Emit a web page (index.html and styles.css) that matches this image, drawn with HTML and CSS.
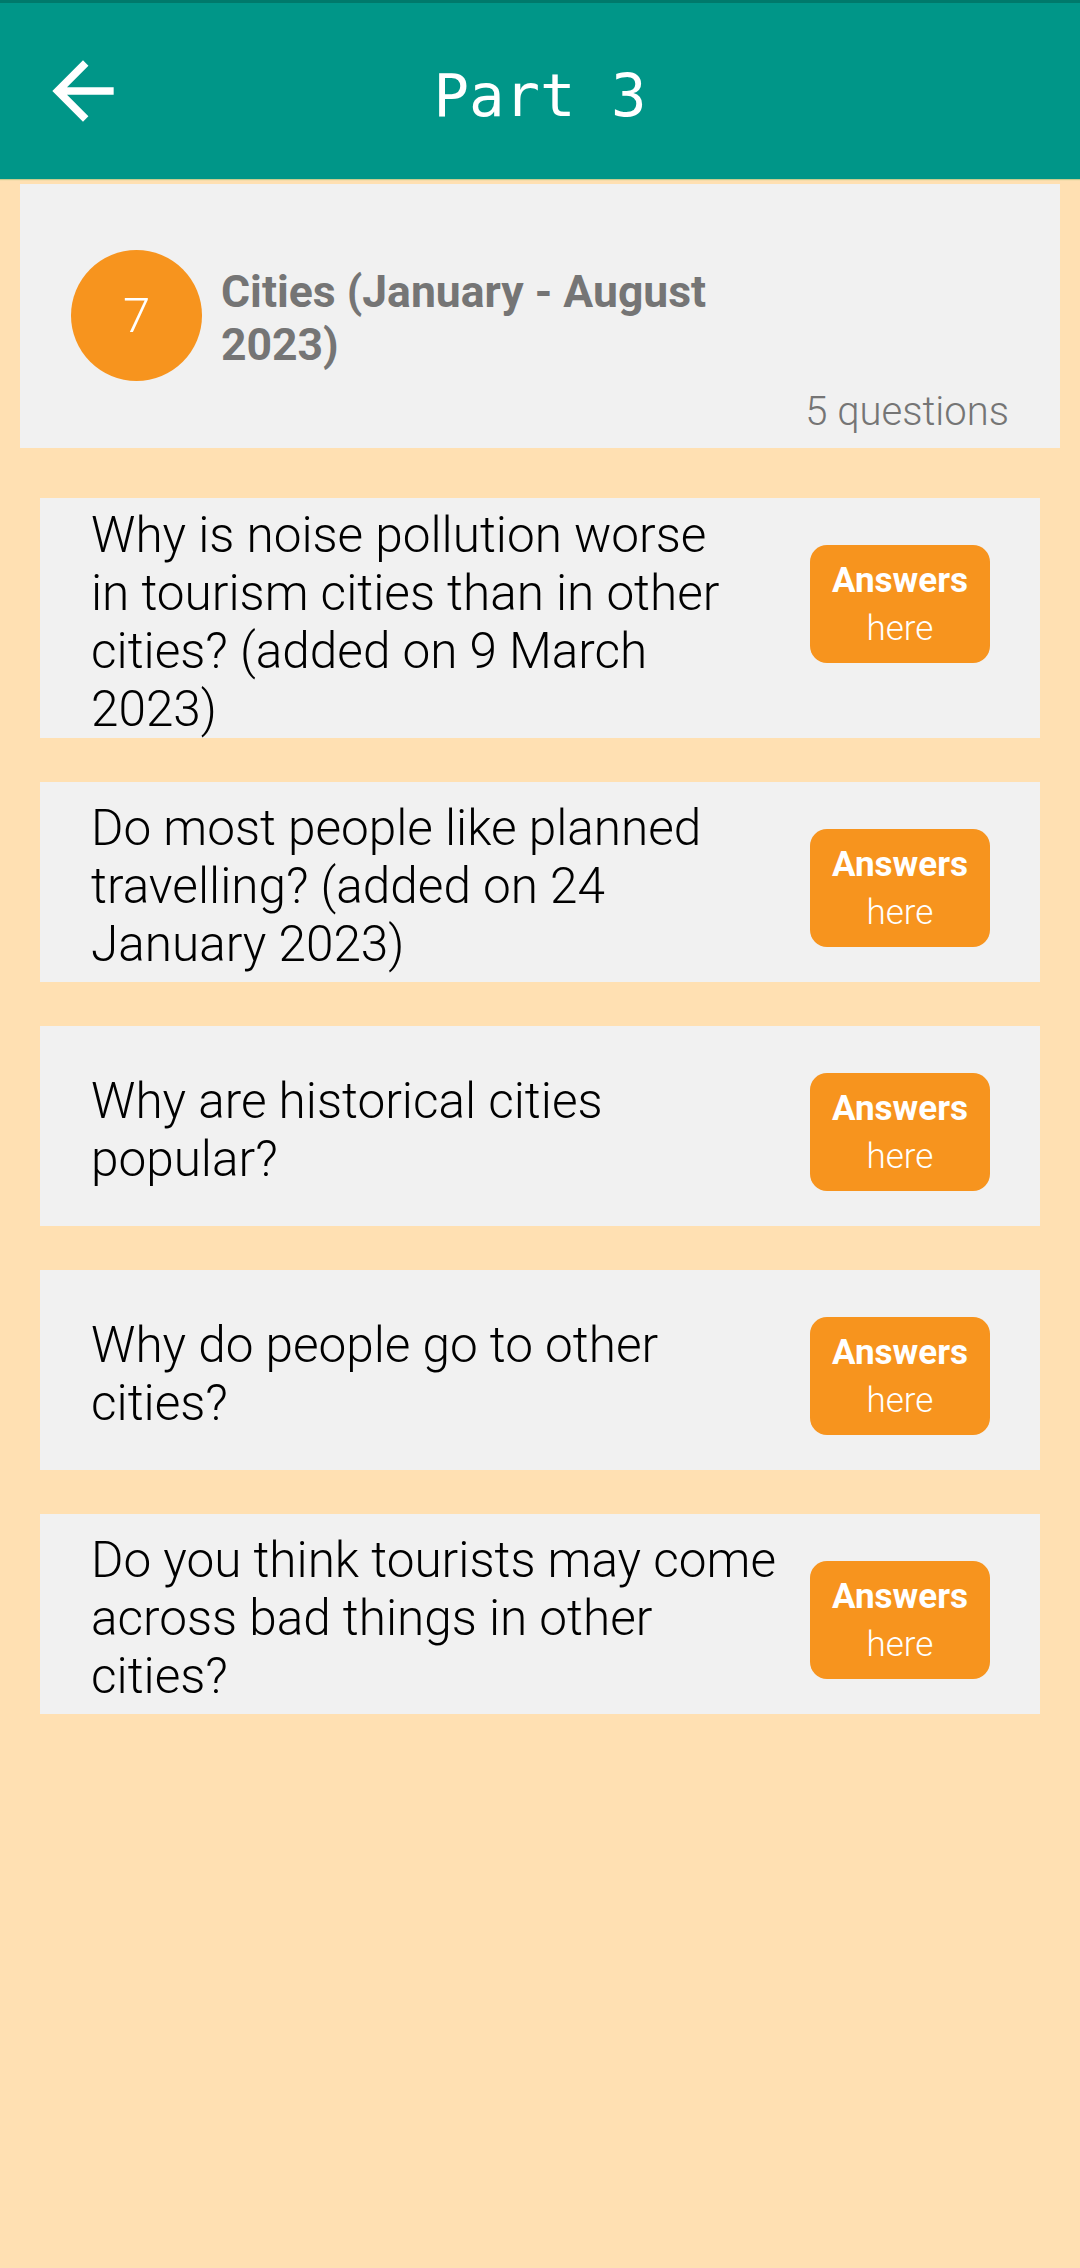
FILE: index.html
```html
<!DOCTYPE html>
<html lang="en">
<head>
<meta charset="utf-8">
<title>Part 3</title>
<link rel="stylesheet" href="styles.css">
</head>
<body>
<header class="appbar">
  <div class="appbar-nav">
    <svg class="back-icon" viewBox="0 0 24 24" aria-hidden="true"><path d="M20 11H7.83l5.59-5.59L12 4l-8 8 8 8 1.41-1.41L7.83 13H20v-2z"/></svg>
  </div>
  <h1 class="appbar-title">Part 3</h1>
  <div></div>
</header>

<main class="content">
  <section class="topic-card">
    <div class="topic-row">
      <div class="topic-badge">7</div>
      <h2 class="topic-title">Cities (January - August<br>2023)</h2>
    </div>
    <div class="topic-count">5 questions</div>
  </section>

  <div class="question">
    <p class="question-text">Why is noise pollution worse<br>in tourism cities than in other<br>cities? (added on 9 March<br>2023)</p>
    <a class="answer-btn"><span class="answer-strong">Answers</span><span class="answer-light">here</span></a>
  </div>

  <div class="question">
    <p class="question-text">Do most people like planned<br>travelling? (added on 24<br>January 2023)</p>
    <a class="answer-btn"><span class="answer-strong">Answers</span><span class="answer-light">here</span></a>
  </div>

  <div class="question">
    <p class="question-text">Why are historical cities<br>popular?</p>
    <a class="answer-btn"><span class="answer-strong">Answers</span><span class="answer-light">here</span></a>
  </div>

  <div class="question">
    <p class="question-text">Why do people go to other<br>cities?</p>
    <a class="answer-btn"><span class="answer-strong">Answers</span><span class="answer-light">here</span></a>
  </div>

  <div class="question">
    <p class="question-text">Do you think tourists may come<br>across bad things in other<br>cities?</p>
    <a class="answer-btn"><span class="answer-strong">Answers</span><span class="answer-light">here</span></a>
  </div>
</main>
</body>
</html>
```

FILE: styles.css
```css
* { box-sizing: border-box; }

html, body {
  margin: 0;
  padding: 0;
}

body {
  width: 1080px;
  min-height: 2268px;
  background: #ffe0b2;
  font-family: Roboto, "Noto Sans", "Liberation Sans", sans-serif;
}

.appbar {
  height: 179px;
  background: #009688;
  border-top: 3px solid #00796b;
  display: grid;
  grid-template-columns: 1fr auto 1fr;
  align-items: center;
  box-shadow: 0 1px 1px rgba(160, 190, 120, 0.6);
}

.appbar-nav {
  display: flex;
  align-items: center;
  padding-left: 37px;
}

.back-icon {
  width: 92px;
  height: 92px;
  fill: #ffffff;
  display: block;
}

.appbar-title {
  margin: 0;
  padding-top: 8px;
  font-family: "DejaVu Sans Mono", "Liberation Mono", monospace;
  font-weight: 400;
  font-size: 59px;
  color: #ffffff;
  letter-spacing: 0;
}

.content {
  padding: 5px 20px 40px;
  display: flex;
  flex-direction: column;
}

.topic-card {
  background: #f1f1f1;
  padding: 66px 51px 13px 51px;
  margin-bottom: 50px;
}

.topic-row {
  display: flex;
  align-items: center;
}

.topic-badge {
  width: 131px;
  height: 131px;
  border-radius: 50%;
  background: #f7941e;
  color: #ffffff;
  font-size: 49px;
  font-weight: 300;
  display: flex;
  align-items: center;
  justify-content: center;
  flex: none;
}

.topic-title {
  margin: 0 0 0 19px;
  padding-top: 6px;
  font-size: 44.5px;
  line-height: 53px;
  font-weight: 700;
  color: #757575;
}

.topic-count {
  text-align: right;
  margin-top: 7px;
  font-size: 40px;
  font-weight: 300;
  color: #757575;
}

.question {
  margin: 0 20px 44px;
  min-height: 200px;
  background: #f1f1f1;
  display: flex;
  align-items: center;
  justify-content: space-between;
  padding: 0 50px 0 51px;
}

.question-text {
  margin: 0;
  padding-top: 8px;
  font-size: 49.5px;
  line-height: 58px;
  font-weight: 300;
  color: #000000;
}

.answer-btn {
  align-self: flex-start;
  margin-top: 47px;
  width: 180px;
  height: 118px;
  border-radius: 17px;
  background: #f7941e;
  color: #ffffff;
  display: flex;
  flex-direction: column;
  align-items: center;
  padding-top: 12px;
  flex: none;
}

.answer-strong {
  font-size: 35px;
  line-height: 48px;
  font-weight: 700;
}

.answer-light {
  font-size: 35px;
  line-height: 48px;
  font-weight: 300;
}
```
